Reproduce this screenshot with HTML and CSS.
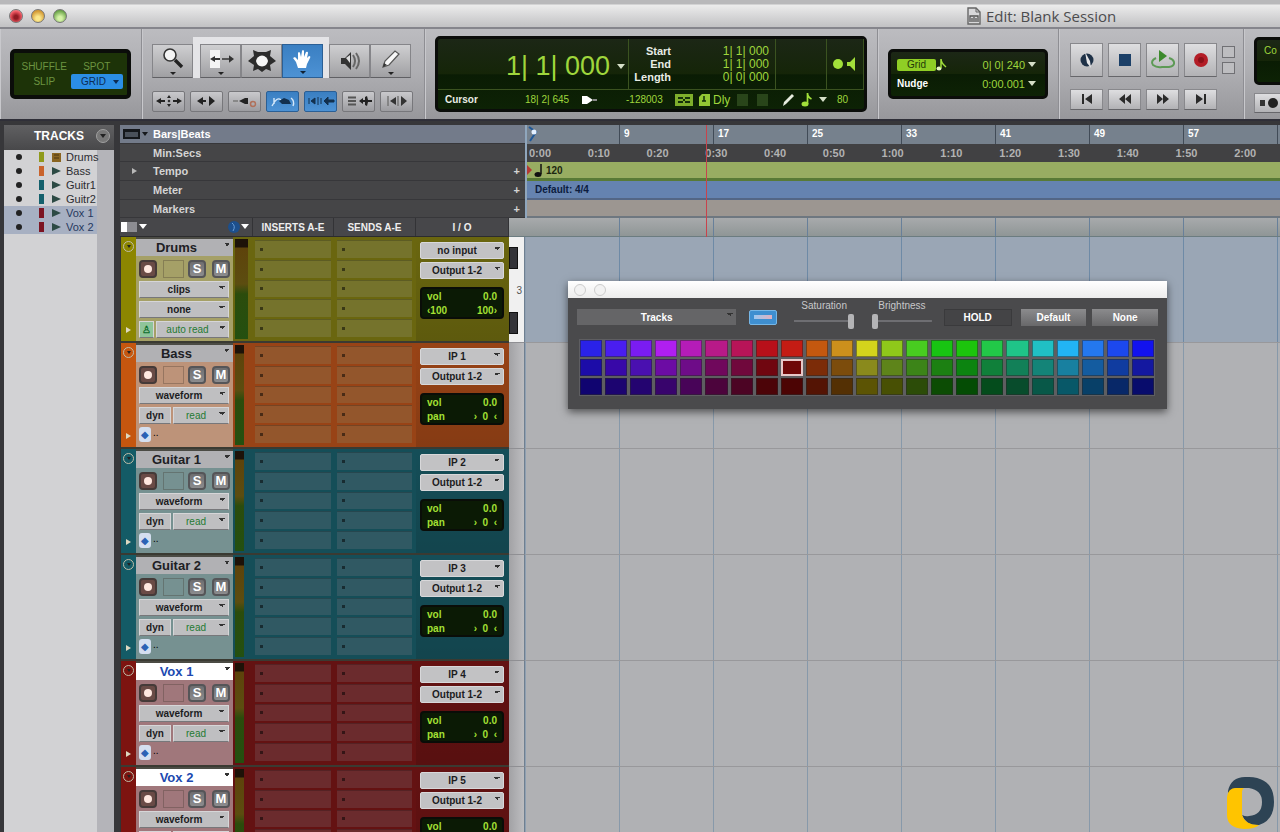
FILE: index.html
```
<!DOCTYPE html>
<html lang="en">
<head>
  <meta charset="UTF-8">
  <meta name="viewport" content="width=device-width, initial-scale=1.0">
  <title>Edit: Blank Session</title>
  <link rel="stylesheet" href="styles.css">
</head>
<body>
  <!-- Window title -->
  <header class="titlebar">
    <div class="lights">
      <button class="light red" aria-label="Close"></button>
      <button class="light yellow" aria-label="Minimize"></button>
      <button class="light green" aria-label="Zoom"></button>
    </div>
    <div class="title">
      <svg width="14" height="18" viewBox="0 0 14 18"><path d="M1 1h8l4 4v12H1z" fill="#d8d8da" stroke="#666" stroke-width="1.4"/><path d="M9 1v4h4" fill="none" stroke="#666"/><path d="M3 15V9h8v6M5 15v-4M7 15v-5M9 15v-4" stroke="#555" fill="none" stroke-width="1.3"/></svg>
      <span>Edit: Blank Session</span>
    </div>
  </header>

  <!-- Toolbar -->
  <div class="toolbar">
    <section class="group modes">
      <div class="lcd mode-lcd">
        <button>SHUFFLE</button>
        <button>SPOT</button>
        <button>SLIP</button>
        <button class="on">GRID<i class="caret"></i></button>
      </div>
    </section>

    <section class="group tools">
      <div class="tool-row">
        <button class="tool" aria-label="Zoomer"><svg width="28" height="30" viewBox="0 0 28 30"><circle cx="11" cy="9" r="6" fill="#f4f4f4" stroke="#333" stroke-width="1.6"/><path d="M16 14l7 7" stroke="#222" stroke-width="3.4"/><path d="M11 26h6l-3 3z" fill="#222"/></svg></button>
        <div class="smart">
          <button class="tool" aria-label="Trim"><svg width="28" height="30" viewBox="0 0 28 30"><path d="M3 4h10v18H3z" fill="#f4f4f4"/><path d="M3 13l5-3v2h5v2H8v2zM15 12.200h7v-3l5 3.800-5 3.800v-3h-7z" fill="#333"/><path d="M11 26h6l-3 3z" fill="#222"/></svg></button>
          <button class="tool" aria-label="Selector"><svg width="28" height="30" viewBox="0 0 28 30"><path d="M5 4l5 2h8l5-2-1 6 6 5-6 4 1 6-5-2-4 3-4-3-5 2 1-6-6-4 6-5z" fill="#2c2c2c"/><path d="M8 15q1-5 6-5.500 5 .5 6 5.500-1 5-6 5.500-5-.5-6-5.500z" fill="#f6f6f6"/></svg></button>
          <button class="tool on" aria-label="Grabber"><svg width="28" height="30" viewBox="0 0 28 30"><path d="M9 22l-2-6-3-4 2-1 3 3V7q1-2 2 0l1 4 1-6q1-2 2 0v6l2-5q2-1 2 1l-1 5 2-2q2 0 1 2l-3 6-1 4z" fill="#fff"/><path d="M11 25h6l-3 3z" fill="#123"/></svg></button>
        </div>
        <button class="tool" aria-label="Scrubber"><svg width="28" height="30" viewBox="0 0 28 30"><path d="M5 12h4l6-6v18l-6-6H5z" fill="#333"/><path d="M10 12l4-3v8z" fill="#ddd"/><path d="M17 9q4 6 0 12M20 7q6 8 0 16" fill="none" stroke="#666" stroke-width="2"/></svg></button>
        <button class="tool" aria-label="Pencil"><svg width="28" height="30" viewBox="0 0 28 30"><path d="M6 21l2-6L18 5l4 3-10 11z" fill="#f8f8f8" stroke="#555" stroke-width="1.200"/><path d="M6 21l1-4 3 2z" fill="#333"/><path d="M11 26h6l-3 3z" fill="#222"/></svg></button>
      </div>
      <div class="option-row">
        <button class="small" aria-label="Zoom toggle"><svg width="28" height="14" viewBox="0 0 28 14"><path d="M1 7l5-3v2h4v2H6v2zM27 7l-5-3v2h-4v2h4v2zM14 1l2 3h-4zM14 13l2-3h-4zM12.500 7L14 5.500 15.500 7 14 8.500z" fill="#222"/></svg></button>
        <button class="small" aria-label="Tab to transient"><svg width="28" height="14" viewBox="0 0 28 14"><path d="M4 7l6-4v3h3v2h-3v3zM16 2l6 5-6 5z" fill="#222"/></svg></button>
        <button class="small" aria-label="Commands focus"><svg width="28" height="14" viewBox="0 0 28 14"><path d="M2 6h5v2H2z" fill="#888"/><path d="M8 7l6-3h3v6h-3z" fill="#222"/><circle cx="22" cy="10" r="2.500" fill="none" stroke="#b0705a" stroke-width="1.500"/></svg></button>
        <button class="small on" aria-label="Link timeline"><svg width="28" height="14" viewBox="0 0 28 14"><path d="M5 10V4M3 12q5-10 9-6M24 12q2-5-2-8" fill="none" stroke="#d5e8fa" stroke-width="1.400"/><path d="M10 7l5-3 5 2 2 4h-9z" fill="#12304f"/></svg></button>
        <button class="small on" aria-label="Link track"><svg width="28" height="14" viewBox="0 0 28 14"><path d="M2 4v6M4 7l4-3v6zM11 3v8M14 4v6M17 7l4-4v3h6v2h-6v3z" fill="#12304f" stroke="#12304f"/></svg></button>
        <button class="small" aria-label="Mirrored MIDI"><svg width="28" height="14" viewBox="0 0 28 14"><path d="M3 3.500h8M3 7h8M3 10.500h8" stroke="#555" stroke-width="2"/><path d="M14 7l4-3v2h2V3l2-1 1 4h4v2h-4l-1 4-2-1V8h-2v2z" fill="#222"/></svg></button>
        <button class="small" aria-label="Layered editing"><svg width="28" height="14" viewBox="0 0 28 14"><path d="M5 2v10M15 2v10" stroke="#777" stroke-width="1.500"/><path d="M13 3v8L7 7zM18 2l6 5-6 5z" fill="#333"/></svg></button>
      </div>
    </section>

    <section class="group counter">
      <div class="lcd counter-lcd">
        <div class="main-count">1| 1| 000<i class="caret"></i></div>
        <dl class="selection">
          <dt>Start</dt><dd>1| 1| 000</dd>
          <dt>End</dt><dd>1| 1| 000</dd>
          <dt>Length</dt><dd>0| 0| 000</dd>
        </dl>
        <div class="blank"></div>
        <div class="status">
          <svg width="26" height="16" viewBox="0 0 26 16"><circle cx="6" cy="8" r="5" fill="#a2e03a"/><path d="M15 6h3l5-5v14l-5-5h-3z" fill="#a2e03a"/></svg>
        </div>
        <div class="cursor-row">
          <b>Cursor</b>
          <span>18| 2| 645</span>
          <svg width="17" height="10" viewBox="0 0 17 10"><path d="M1 1h5l6 4-6 4H1z" fill="#fff"/><path d="M12 4h4v2h-4z" fill="#888"/></svg>
          <span>-128003</span>
          <svg width="18" height="12" viewBox="0 0 18 12"><path d="M0 0h18v12H0z" fill="#7fae2c"/><path d="M3 3h5v2H3zM10 3h5v2h-5zM3 7h5v2H3zM10 7h5v2h-5zM8 5h2v2H8z" fill="#15300a"/></svg>
          <svg width="11" height="12" viewBox="0 0 11 12"><path d="M3 0h8v12H0V3z" fill="#93c834"/><path d="M3 7h4M5 2v5" stroke="#15300a" stroke-width="1.500"/></svg>
          <span class="dly">Dly</span>
          <i class="dim"></i>
          <i class="dim"></i>
          <svg width="13" height="14" viewBox="0 0 13 14"><path d="M1 13l1-4 8-8 2 2-8 8z" fill="#e8ece0"/></svg>
          <svg width="12" height="15" viewBox="0 0 12 15"><ellipse cx="4" cy="12" rx="3.500" ry="2.500" fill="#a2e03a"/><path d="M6.500 12V1q0 4 4 6" fill="none" stroke="#a2e03a" stroke-width="1.700"/></svg>
          <i class="caret"></i>
          <span>80</span>
        </div>
      </div>
    </section>

    <section class="group gridval">
      <div class="lcd grid-lcd">
        <span class="grid-tag">Grid</span>
        <svg width="12" height="13" viewBox="0 0 12 13"><ellipse cx="3" cy="10.500" rx="2.500" ry="2" fill="#e4f4c0"/><path d="M5 10V1q0 4 5 8" fill="none" stroke="#a2e03a" stroke-width="1.500"/></svg>
        <span class="val">0| 0| 240</span><i class="caret"></i>
        <b>Nudge</b><span></span>
        <span class="val">0:00.001</span><i class="caret"></i>
      </div>
    </section>

    <section class="group transport">
      <div class="play-row">
        <button class="key" aria-label="Online"><svg width="20" height="20" viewBox="0 0 20 20"><circle cx="10" cy="10" r="6.500" fill="#1e3147"/><path d="M8 2l5 9 1 7-4-5z" fill="#e4e4e6"/></svg></button>
        <button class="key" aria-label="Stop"><svg width="20" height="20" viewBox="0 0 20 20"><path d="M4 4h12v12H4z" fill="#1c4068"/></svg></button>
        <button class="key" aria-label="Play"><svg width="28" height="22" viewBox="0 0 28 22"><path d="M10 1l8 6-8 6z" fill="#3c8a2c"/><path d="M7 9q-6 3-3 7 4 3 9 2h7q6-1 5-5-1-3-5-4" fill="none" stroke="#5d9a55" stroke-width="2"/></svg></button>
        <button class="key" aria-label="Record"><svg width="20" height="20" viewBox="0 0 20 20"><circle cx="10" cy="10" r="7" fill="#b31d26"/><circle cx="10" cy="10" r="3" fill="#8b1018"/></svg></button>
        <div class="mini-stack"><button aria-label="Wait for note"></button><button aria-label="Metronome"></button></div>
      </div>
      <div class="seek-row">
        <button class="key" aria-label="Return to zero"><svg width="16" height="12" viewBox="0 0 16 12"><path d="M3 1h2v10H3zM13 1v10L6 6z" fill="#2a2a2a"/></svg></button>
        <button class="key" aria-label="Rewind"><svg width="16" height="12" viewBox="0 0 16 12"><path d="M8 1v10L2 6zM14 1v10L8 6z" fill="#2a2a2a"/></svg></button>
        <button class="key" aria-label="Fast forward"><svg width="16" height="12" viewBox="0 0 16 12"><path d="M2 1v10l6-5zM8 1v10l6-5z" fill="#2a2a2a"/></svg></button>
        <button class="key" aria-label="Go to end"><svg width="16" height="12" viewBox="0 0 16 12"><path d="M3 1v10l7-5zM11 1h2v10h-2z" fill="#2a2a2a"/></svg></button>
      </div>
    </section>

    <section class="group midi">
      <div class="lcd midi-lcd">Co</div>
      <button class="key" aria-label="Metronome click"><svg width="34" height="14" viewBox="0 0 34 14"><path d="M3 4h5v6H3z" fill="#333"/><circle cx="16" cy="7" r="5" fill="#222"/></svg></button>
    </section>
  </div>

  <div class="workspace">
    <!-- Track list -->
    <aside class="track-list">
      <h2>TRACKS <button aria-label="Track list menu"><i class="caret"></i></button></h2>
      <ul id="track-names"></ul>
    </aside>

    <main class="edit">
      <div class="rulers">
        <div class="ruler-names">
          <div class="main-ruler"><svg width="26" height="12" viewBox="0 0 26 12"><path d="M0 1h17v10H0z" fill="#15181c"/><path d="M2 4h13v5H2z" fill="#4a515b"/><path d="M19 4h6l-3 4z" fill="#15181c"/></svg><span>Bars|Beats</span></div>
          <div><i></i><span>Min:Secs</span></div>
          <div><i class="expand"></i><span>Tempo</span><em>+</em></div>
          <div><i></i><span>Meter</span><em>+</em></div>
          <div><i></i><span>Markers</span><em>+</em></div>
        </div>
        <div class="ruler-lines">
          <div class="bars" id="bars"></div>
          <div class="time"><div class="time-cells" id="time"></div></div>
          <div class="tempo">
            <svg width="18" height="16" viewBox="0 0 18 16"><path d="M0 3l5 5-5 5z" fill="#b33a35"/><ellipse cx="11" cy="12.500" rx="3.500" ry="2.500" fill="#111"/><path d="M14 12V2" stroke="#111" stroke-width="1.500"/></svg>120
          </div>
          <div class="meter-line">Default: 4/4</div>
          <div class="markers"></div>
        </div>
      </div>

      <div class="columns">
        <div class="col-names">
          <div class="view-col">
            <svg width="28" height="14" viewBox="0 0 28 14"><path d="M1 2h6v10H1z" fill="#fff"/><path d="M7 2h10v10H7z" fill="#8d8d92"/><path d="M19 4h8l-4 5z" fill="#fff"/></svg>
            <svg width="24" height="14" viewBox="0 0 24 14"><circle cx="6" cy="7" r="6" fill="#1d4f8c"/><path d="M4 3q4 3 1 8" stroke="#6aa0dc" fill="none"/><path d="M13 4h8l-4 5z" fill="#fff"/></svg>
          </div>
          <div>INSERTS A-E</div>
          <div>SENDS A-E</div>
          <div>I / O</div>
        </div>
        <div class="lane-head"></div>
      </div>

      <div class="tracks" id="tracks"></div>
      <div class="playhead"></div>

      <!-- Color palette window -->
      <div class="palette">
        <div class="palette-title"><button aria-label="Close palette"></button><button aria-label="Minimize palette"></button></div>
        <div class="palette-bar">
          <select aria-label="Apply to"><option>Tracks</option></select>
          <button class="strip-color" aria-label="Apply to channel strip"><i></i></button>
          <label>Saturation<input type="range" value="100"></label>
          <label>Brightness<input type="range" value="0"></label>
          <button class="dark">HOLD</button>
          <button>Default</button>
          <button>None</button>
        </div>
        <div class="swatches" id="swatches"></div>
      </div>

      <svg class="badge" width="48" height="52" viewBox="0 0 48 52">
        <path d="M1 14Q4 0 18 0h4q25 1 25 25 0 18-15 23-13 1-17-10 4 2 7 1 13-1 13-14 0-12-13-14H10Q4 11 1 17z" fill="#2d4354"/>
        <path d="M0 20q1-9 9-9h8q-2 1-2 5v22q3 10 17 10-4 4-15 4Q0 51 0 38z" fill="#ffc400"/>
      </svg>
    </main>
  </div>

  <script src="script.js"></script>
</body>
</html>
```
FILE: styles.css
```
* {
  box-sizing: border-box;
}

body {
  margin: 0;
  height: 100vh;
  display: flex;
  flex-direction: column;
  overflow: hidden;
  background: #3b3b3e;
  font-family: "Liberation Sans", Arial, sans-serif;
  font-size: 10px;
}

button, select, input {
  margin: 0;
  padding: 0;
  border: none;
  font: inherit;
  color: inherit;
}

svg {
  display: block;
  flex: none;
}

/* Title bar */
.titlebar {
  height: 29px;
  flex: none;
  display: flex;
  align-items: center;
  padding: 4px 0 0 9px;
  background: linear-gradient(#b8b8ba 0, #b8b8ba 4px, #ececec 5px, #c3c3c5 26px);
  border-bottom: 2px solid #85858c;
}

.lights {
  display: flex;
  gap: 8px;
}

.light {
  width: 14px;
  height: 14px;
  border-radius: 50%;
  border: 1px solid #777;
}

.red { background: radial-gradient(circle at 50% 60%, #8e1a22 20%, #ee5560 60%, #f5c0c0); }
.yellow { background: radial-gradient(circle at 50% 70%, #fbe78a 20%, #d49b36 70%); }
.green { background: radial-gradient(circle at 50% 70%, #d4f2a6 20%, #68a246 75%); }

.title {
  display: flex;
  align-items: center;
  gap: 5px;
  margin-left: 900px;
  font-family: "Open Sans", "Noto Sans", sans-serif;
  font-size: 15px;
  line-height: 20px;
  color: #4c4c4e;
  white-space: nowrap;
}

/* Toolbar */
.toolbar {
  height: 92px;
  flex: none;
  display: flex;
  background: linear-gradient(#bcbcc0, #adadb1 50%, #97979b);
  border-bottom: 2px solid #2f2f38;
  overflow: hidden;
}

.group {
  flex: none;
  display: flex;
  flex-direction: column;
  justify-content: center;
  padding: 0 10px;
  border-right: 1px solid #8e8e93;
  box-shadow: inset 1px 0 #c8c8cc;
}

.lcd {
  background: linear-gradient(#1c2716, #152508 50%, #0a1c04 51%, #0d2205);
  border: 3px solid #0b0d0a;
  border-radius: 5px;
  color: #9fd63c;
}

.mode-lcd {
  width: 121px;
  height: 50px;
  padding: 6px 4px;
  display: grid;
  grid-template-columns: 1fr 1fr;
  background: #1d3308;
  border-width: 4px;
}

.mode-lcd button {
  background: none;
  color: #6c9440;
}

.mode-lcd .on {
  display: flex;
  align-items: center;
  justify-content: flex-end;
  gap: 7px;
  padding-right: 4px;
  background: #2b8ee6;
  color: #0c2c55;
  border-radius: 2px;
}

.mode-lcd .caret {
  border-width: 4px 3px 0;
  border-top-color: #0c2c55;
}

.tools {
  width: 283px;
  gap: 13px;
}

.tool-row {
  display: flex;
  align-items: flex-end;
}

.smart {
  display: flex;
  padding: 7px 6px 0 7px;
  background: #e4e4e7;
}

.tool {
  width: 41px;
  height: 34px;
  display: flex;
  justify-content: center;
  align-items: center;
  background: linear-gradient(#cfcfd1, #a0a0a3);
  border: 1px solid #858589;
  border-bottom-color: #606064;
}

.tool.on, .small.on {
  background: linear-gradient(#3a7fc2, #4d92d4);
  border-color: #2b5f95;
}

.option-row {
  display: flex;
  gap: 5px;
}

.small {
  width: 33px;
  height: 21px;
  display: flex;
  justify-content: center;
  align-items: center;
  background: linear-gradient(#c9c9cc, #9c9ca0);
  border: 1px solid #77777b;
  border-radius: 2px;
}

.counter {
  width: 453px;
}

.counter-lcd {
  height: 76px;
  display: grid;
  grid-template-columns: 191px 147px 51px 1fr;
  grid-template-rows: 50px 1fr;
}

.counter-lcd > div:not(.cursor-row), .selection {
  border-right: 1px solid #3b5320;
}

.counter-lcd > .status {
  display: flex;
  justify-content: center;
  align-items: center;
  border: none;
}

.main-count {
  display: flex;
  align-items: center;
  justify-content: flex-end;
  gap: 7px;
  padding: 4px 3px 0 0;
  font-size: 27px;
}

.caret {
  width: 0;
  height: 0;
  border: 4px solid transparent;
  border-top: 5px solid #d5dfc8;
  border-bottom: 0;
}

.selection {
  margin: 0;
  padding: 6px 6px 0 0;
  display: grid;
  grid-template-columns: 42px 1fr;
  grid-auto-rows: 13px;
  font-size: 12px;
  line-height: 13px;
  text-align: right;
}

.selection dt {
  font-size: 11px;
  font-weight: bold;
  color: #e8ece4;
}

.selection dd {
  margin: 0;
}

.cursor-row {
  grid-column: 1 / -1;
  display: grid;
  grid-template-columns: 80px 56px 45px 49px 24px 14px 24px 20px 25px 19px 18px 18px 1fr;
  align-items: center;
  padding-left: 7px;
  border-top: 1px solid #3b5320;
  white-space: nowrap;
}

.cursor-row b {
  color: #e8ece4;
}

.cursor-row .dly {
  font-size: 12px;
}

.dim {
  width: 11px;
  height: 12px;
  background: #29451a;
}

.gridval {
  width: 181px;
  padding: 0 10px;
}

.grid-lcd {
  height: 50px;
  padding: 3px 5px 3px 6px;
  display: grid;
  grid-template-columns: 39px 14px 1fr 12px;
  grid-template-rows: 1fr 1fr;
  align-items: center;
}

.grid-lcd .val {
  text-align: right;
  font-size: 11px;
  padding-right: 3px;
}

.grid-lcd b {
  color: #fff;
}

.grid-tag {
  background: #8fce25;
  color: #1f3a08;
  text-align: center;
  line-height: 12px;
  border-radius: 2px;
}

.transport {
  width: 185px;
  padding: 4px 0 0 11px;
  gap: 12px;
}

.play-row, .seek-row {
  display: flex;
  gap: 5px;
}

.key {
  width: 33px;
  height: 34px;
  display: flex;
  align-items: center;
  justify-content: center;
  background: linear-gradient(#dedee0, #b2b2b5);
  border: 1px solid #88888c;
  border-bottom-color: #66666a;
}

.seek-row .key {
  height: 21px;
}

.mini-stack {
  display: flex;
  flex-direction: column;
  justify-content: center;
  gap: 4px;
}

.mini-stack button {
  width: 13px;
  height: 12px;
  background: #bdbdc0;
  border: 1px solid #707074;
}

.midi {
  padding-top: 2px;
  gap: 8px;
}

.midi-lcd {
  width: 120px;
  height: 48px;
  padding: 5px 7px;
}

.midi .key {
  height: 20px;
  width: 40px;
}

/* Workspace */
.workspace {
  flex: 1;
  min-height: 0;
  display: flex;
  padding: 4px 0 0 4px;
  background: #37373a;
}

.track-list {
  width: 110px;
  flex: none;
  margin-right: 6px;
  background: linear-gradient(to right, #d2d2d4 93px, #b4b4b9 93px);
}

.track-list h2 {
  margin: 0;
  height: 25px;
  display: flex;
  align-items: center;
  justify-content: flex-end;
  gap: 12px;
  padding: 0 4px 4px 0;
  font-size: 12px;
  color: #fff;
  background: linear-gradient(#606062, #48484a);
}

.track-list h2 button {
  width: 14px;
  height: 14px;
  display: flex;
  align-items: center;
  justify-content: center;
  background: #777;
  border: 1px solid #a0a0a0;
  border-radius: 50%;
}

.track-list h2 .caret {
  border-top-color: #222;
  border-width: 4px 3px 0;
}

.track-list ul {
  list-style: none;
  margin: 0 17px 0 0;
  padding: 0;
  font-size: 11px;
}

.track-list li {
  height: 14px;
  display: flex;
  align-items: center;
  padding-left: 12px;
  line-height: 14px;
  color: #2c2c30;
  white-space: nowrap;
}

.track-list li.selected {
  background: #a7b0c2;
  color: #26385e;
}

.dot {
  width: 6px;
  height: 6px;
  flex: none;
  border-radius: 50%;
  background: #222;
}

.chip {
  width: 5px;
  height: 10px;
  flex: none;
  margin: 0 8px 0 17px;
}

.kind {
  width: 14px;
  color: #223;
}

.drums-chip { background: #8f9a1c; }
.bass-chip { background: #c9632c; }
.guitar-chip { background: #14606c; }
.vox-chip { background: #7c1422; }

/* Rulers */
.edit {
  flex: 1;
  min-width: 0;
  position: relative;
  display: flex;
  flex-direction: column;
  overflow: hidden;
}

.rulers, .columns, .track {
  flex: none;
  display: grid;
  grid-template-columns: 405px minmax(0, 1fr);
}

.ruler-names, .ruler-lines {
  display: grid;
  grid-template-columns: minmax(0, 1fr);
  grid-template-rows: 19px 18px 19px 19px 18px;
}

.ruler-names > div {
  display: flex;
  align-items: center;
  padding: 0 5px 0 3px;
  background: #454547;
  border-bottom: 1px solid #37373a;
  color: #d4d4d4;
  font-size: 11px;
  font-weight: bold;
}

.ruler-names > .main-ruler {
  background: #737b8a;
  color: #fff;
}

.ruler-names svg, .ruler-names i {
  width: 26px;
  margin-right: 4px;
}

.ruler-names em {
  margin-left: auto;
  font-style: normal;
}

.ruler-names .expand {
  width: 0;
  margin: 0 16px 0 9px;
  border: 3px solid transparent;
  border-left: 5px solid #b8b8b8;
  border-right: 0;
}

.ruler-lines {
  min-width: 0;
  overflow: hidden;
  border-left: 2px solid #8fa6bd;
}

.bars {
  display: flex;
  background: #76818d;
  color: #fff;
  font-weight: bold;
  line-height: 18px;
  overflow: hidden;
}

.bars div {
  width: 94px;
  flex: none;
  padding-left: 4px;
  border-right: 1px solid #414b57;
}

.bars div:first-child {
  width: 93px;
  padding: 1px 0 0 1px;
}

.time {
  background: #414143;
  color: #b2b2b2;
  font-size: 11px;
  font-weight: bold;
  line-height: 18px;
}

.time-cells {
  display: flex;
  width: calc(100% + 13px);
  padding-left: 2px;
}

.time-cells span {
  flex: 1;
}

.tempo {
  display: flex;
  align-items: center;
  gap: 1px;
  background: #98ad62;
  border-bottom: 3px solid #587a36;
  color: #1c2610;
  font-weight: bold;
}

.meter-line {
  padding-left: 8px;
  background: #6583b0;
  border-bottom: 2px solid #536685;
  color: #0c1c3e;
  font-weight: bold;
  line-height: 17px;
}

.markers {
  background: #9c9691;
  border-bottom: 2px solid #6e7780;
}

/* Column names */
.columns {
  height: 19px;
}

.col-names {
  width: 389px;
  display: grid;
  grid-template-columns: 133px 81px 82px 1fr;
  background: #47474a;
  border-bottom: 1px solid #2c2c2e;
  color: #eee;
  font-weight: bold;
  line-height: 20px;
  text-align: center;
}

.col-names > div {
  height: 18px;
  border-right: 1px solid #333336;
}

.view-col {
  display: flex;
  align-items: center;
  justify-content: space-between;
}

.lane-head {
  margin-left: -16px;
  background: repeating-linear-gradient(to right, transparent 0 93px, #68809a 93px 94px) 17px 0 no-repeat, linear-gradient(#a8aaac, #8f9696);
  border-bottom: 1px solid #6b7c80;
}

/* Tracks */
.tracks {
  flex: 1;
  min-height: 0;
  overflow: hidden;
}

.track {
  height: 106px;
}

.strip {
  display: grid;
  grid-template-columns: 16px 97px 20px 82px 81px 93px 16px;
  min-width: 0;
}

.drums { --edge: #8c8600; --body: #6a660f; --slot: #75732c; --panel: #a5a067; }
.bass { --edge: #c5560f; --body: #984316; --slot: #93562c; --panel: #bd9379; }
.guitar { --edge: #145b66; --body: #154e58; --slot: #305963; --panel: #769191; }
.vox { --edge: #7d1410; --body: #641212; --slot: #6b2b2d; --panel: #a0777b; }

.edge {
  display: flex;
  flex-direction: column;
  justify-content: space-between;
  align-items: center;
  padding: 4px 0 8px;
  background: var(--edge);
  border-left: 1px solid #333;
  border-bottom: 2px solid #3a3a32;
}

.fold {
  width: 11px;
  height: 11px;
  display: flex;
  align-items: center;
  justify-content: center;
  border-radius: 50%;
  background: none;
  border: 1px solid #c0bda8;
}

.fold .caret {
  border-width: 3px 2px 0;
  border-top-color: #222;
}

.play-mark {
  border: 3px solid transparent;
  border-left: 5px solid #ddd8c0;
  border-right: 0;
}

.panel {
  display: flex;
  flex-direction: column;
  gap: 3px;
  background: var(--panel);
  border-bottom: 2px solid #3a3a32;
}

.name {
  height: 19px;
  border-top: 2px solid #4b4b44;
  background: #b1b1b4;
  color: #202024;
  font-size: 13px;
  font-weight: bold;
}

.selected .name {
  background-color: #fff;
  color: #2049b0;
}

/* Drop-downs share one small arrow drawn from two triangles */
select {
  appearance: none;
  text-align-last: center;
  border-radius: 0;
  background:
    linear-gradient(45deg, transparent 50%, #333 50%) right 6px top 4px / 3px 3px no-repeat,
    linear-gradient(-45deg, transparent 50%, #333 50%) right 3px top 4px / 3px 3px no-repeat,
    #c4c4c6;
}

.name select {
  width: 100%;
  height: 17px;
  padding-right: 16px;
  background-color: transparent;
}

.buttons {
  height: 19px;
  display: flex;
  align-items: center;
  padding: 0 3px;
}

.buttons button {
  width: 18px;
  height: 18px;
  background: linear-gradient(#6e6e70, #8c8c8e);
  border: 2px solid #555558;
  border-radius: 4px;
  color: #fff;
  font-size: 13px;
  font-weight: bold;
  line-height: 14px;
}

.buttons .rec {
  display: flex;
  justify-content: center;
  align-items: center;
  background: #6a4b46;
  border-color: #453a38;
}

.buttons .rec i {
  width: 8px;
  height: 8px;
  border-radius: 50%;
  background: #ffe8e0;
}

.well {
  width: 21px;
  height: 18px;
  margin: 0 4px 0 6px;
  border: 1px solid rgba(60, 50, 40, 0.3);
}

.buttons button:last-child {
  margin-left: 6px;
}

.line {
  display: flex;
  gap: 2px;
  padding: 0 4px 0 3px;
}

.line select, .line .dyn, .line .auto {
  height: 17px;
  background-color: #bfbfc1;
  border: 1px solid #d6d6d8;
  border-bottom-color: #77777a;
  color: #1c1c1e;
  font-weight: bold;
}

.line select {
  flex: 1;
  min-width: 0;
  padding-right: 10px;
}

.line .dyn {
  width: 32px;
}

.line .auto {
  width: 15px;
  background: #8fc59a;
  color: #0c6b2c;
}

.line .read {
  color: #1f7a33;
  font-weight: normal;
}

.line .group-icon {
  width: 12px;
  height: 15px;
  background: #d4dff0;
  border-radius: 3px;
  color: #2b62b5;
  line-height: 15px;
}

.level {
  padding: 2px 9px 2px 2px;
  background: var(--body);
  border-bottom: 2px solid #3a3a32;
}

.level div {
  height: 100%;
  background: linear-gradient(#1d1208 8%, #5e430b 9%, #5c4d10 45%, #2b4c0c 55%, #245010);
}

.drums .level {
  padding-right: 5px;
}

.slots {
  display: grid;
  grid-template-rows: repeat(5, 1fr);
  gap: 2px;
  padding: 3px 4px 4px 2px;
  background: var(--body);
  border-bottom: 2px solid #3a3a32;
}

.slots button {
  background: var(--slot);
  border-top: 1px solid rgba(0, 0, 0, 0.2);
  display: flex;
  align-items: center;
  padding-left: 5px;
}

.slots i {
  width: 3px;
  height: 3px;
  background: rgba(0, 0, 0, 0.5);
}

.io {
  display: flex;
  flex-direction: column;
  gap: 3px;
  padding: 5px 5px 0 4px;
  background: linear-gradient(rgba(0, 0, 0, 0), rgba(0, 0, 0, 0.12)), var(--body);
  border-bottom: 2px solid #3a3a32;
}

.io select {
  height: 17px;
  background-color: #c2c2c4;
  border: 1px solid #d8d8da;
  border-radius: 2px;
  color: #1c1c1e;
  font-weight: bold;
  padding-right: 10px;
}

.volume {
  height: 32px;
  margin: 5px 0 0 0;
  padding: 0 5px;
  display: grid;
  grid-template-columns: 1fr auto;
  align-items: center;
  background: #0b1a05;
  border: 2px solid #0a0d08;
  border-radius: 4px;
  color: #a4e034;
  font-weight: bold;
}

.volume span:nth-child(even) {
  text-align: right;
}

.gutter {
  background: linear-gradient(to right, #a2a2a5, #bdbdc0);
  border-right: 1px solid #6f7f90;
  border-bottom: 1px solid #8f8f93;
}

.keys {
  display: flex;
  flex-direction: column;
  justify-content: space-between;
  padding: 10px 2px 8px 0;
  background: #f0f0f0;
  color: #555;
  text-align: right;
}

.keys i {
  width: 9px;
  height: 22px;
  background: #333338;
  border: 1px solid #111;
}

.lane {
  border-left: 1px solid #8fa0b2;
  border-bottom: 1px solid #98989b;
  background: repeating-linear-gradient(to right, transparent 0 93px, #8799aa 93px 94px), #b0b1b4;
}

.drums .lane {
  background: repeating-linear-gradient(to right, transparent 0 93px, #6e8aa6 93px 94px), #9aa6b5;
}

.playhead {
  position: absolute;
  left: 586px;
  top: 0;
  width: 1px;
  height: 112px;
  background: #c8434c;
}

/* Color palette */
.palette {
  position: absolute;
  left: 448px;
  top: 156px;
  width: 599px;
  background: #4a4a4c;
  box-shadow: 0 3px 8px rgba(0, 0, 0, 0.55);
}

.palette-title {
  height: 17px;
  display: flex;
  align-items: center;
  gap: 8px;
  padding-left: 6px;
  background: linear-gradient(#fff, #ececec);
}

.palette-title button {
  width: 12px;
  height: 12px;
  border-radius: 50%;
  border: 1px solid #ccc;
  background: #f2f2f2;
}

.palette-bar {
  height: 34px;
  display: flex;
  align-items: center;
  padding: 4px 9px 0;
  color: #fff;
  font-weight: bold;
}

.palette-bar select {
  width: 160px;
  height: 16px;
  background-color: #656567;
}

.palette-bar .strip-color {
  width: 28px;
  height: 15px;
  margin: 0 17px 0 13px;
  padding: 0 4px;
  background: #3f8fd0;
  border: 1px solid #76b6e6;
  border-radius: 2px;
}

.strip-color i {
  display: block;
  height: 4px;
  background: linear-gradient(to right, #9cc8f0, #e0b0c0);
}

.palette-bar label {
  width: 60px;
  height: 32px;
  margin-right: 18px;
  display: flex;
  flex-direction: column;
  align-items: center;
  gap: 2px;
  font-size: 10px;
  font-weight: normal;
  line-height: 10px;
  color: #c8c8ca;
}

.palette-bar label + label {
  margin-right: 12px;
}

.palette-bar input {
  appearance: none;
  width: 100%;
  height: 16px;
  background: linear-gradient(#6e6e72, #6e6e72) center / 100% 2px no-repeat;
}

.palette-bar input::-webkit-slider-thumb {
  appearance: none;
  width: 6px;
  height: 15px;
  border-radius: 2px;
  background: #b4b4b6;
}

.palette-bar > button {
  width: 66px;
  height: 17px;
  margin-left: 6px;
  background: linear-gradient(#8b8b8d, #68686a);
}

.palette-bar > .dark {
  width: 68px;
  margin-right: 3px;
  margin-left: 0;
  background: #444446;
  border: 1px solid #3a3a3c;
}

.swatches {
  display: grid;
  grid-template-columns: repeat(23, 1fr);
  grid-auto-rows: 17px;
  gap: 2px 3px;
  margin: 7px 12px 13px 11px;
  padding: 1px;
  background: #5e5e61;
}

.swatches button {
  border: 1px solid rgba(40, 40, 40, 0.5);
}

.swatches .picked {
  border: 2px solid #e8c8c8;
}

.badge {
  position: absolute;
  right: 5px;
  bottom: 3px;
}
```
FILE: script.js
```
const tracks = [
  { name: "Drums", short: "Drums", color: "drums", input: "no input", midi: true },
  { name: "Bass", short: "Bass", color: "bass", input: "IP 1" },
  { name: "Guitar 1", short: "Guitr1", color: "guitar", input: "IP 2" },
  { name: "Guitar 2", short: "Guitr2", color: "guitar", input: "IP 3" },
  { name: "Vox 1", short: "Vox 1", color: "vox", input: "IP 4", selected: true },
  { name: "Vox 2", short: "Vox 2", color: "vox", input: "IP 5", selected: true }
];

// Palette colors, one row per brightness
const palette = [
  "#2a22e8 #4a1ef0 #7a1cf2 #b01ff0 #b51cb8 #b81a88 #b81458 #b8101a #c41c14 #c4580f #cc901c #d4d41c #8fc81a #48cc20 #18c412 #1cc40c #22c848 #1fc488 #20c0c4 #22b4f4 #2478ee #1c48ee #1212ee",
  "#1c0ca8 #3808a8 #4a10b0 #6c0ca4 #6e0c88 #70085c #70083c #700610 #6e0808 #7c2c08 #7c4c0c #8a8a1c #5e841a #3c8418 #1c8012 #0c8410 #10803a #128058 #148478 #1880a0 #145ca0 #103ca0 #1418a0",
  "#100470 #1c0470 #240470 #38046c #480458 #4c043c #4c0424 #4c0408 #4c0404 #541404 #543004 #5c5404 #485004 #2c4c08 #0c4c04 #044c04 #044c1c #084c2c #085848 #085868 #084068 #082868 #080c6c"
];

document.getElementById("track-names").innerHTML = tracks.map(t => `
  <li class="${t.selected ? "selected" : ""}">
    <i class="dot"></i><i class="chip ${t.color}-chip"></i>
    <svg class="kind" width="14" height="10" viewBox="0 0 14 10">${t.midi
      ? '<path d="M0 1h9v9H0z" fill="#8a6420"/><path d="M2 3h5M2 6h5" stroke="#4a3410"/>'
      : '<path d="M0 1l9 4-9 4z" fill="#2c4a44"/>'}</svg>
    ${t.short}
  </li>`).join("");

// Bar numbers, every 8 bars
const bars = ["", 9, 17, 25, 33, 41, 49, 57];
document.getElementById("bars").innerHTML = bars.map((b, i) => i === 0
  ? '<div><svg width="12" height="16" viewBox="0 0 12 16"><path d="M1 1l7 5-6 9" fill="none" stroke="#1f5796" stroke-width="2"/><circle cx="6" cy="6" r="2.500" fill="#e4f0ff"/></svg></div>'
  : `<div>${b}</div>`).join("");

let times = "";
for (let s = 0; s <= 120; s += 10) {
  times += `<span>${Math.floor(s / 60)}:${String(s % 60).padStart(2, "0")}</span>`;
}
document.getElementById("time").innerHTML = times;

const slots = '<div class="slots">' + '<button aria-label="Empty slot"><i></i></button>'.repeat(5) + "</div>";

function trackLines(t) {
  if (t.midi) {
    return `
      <div class="line"><select aria-label="View"><option>clips</option></select></div>
      <div class="line"><select aria-label="Patch"><option>none</option></select></div>
      <div class="line"><button class="auto" aria-label="Timebase">♙</button><select class="read" aria-label="Automation"><option>auto read</option></select></div>`;
  }
  return `
      <div class="line"><select aria-label="View"><option>waveform</option></select></div>
      <div class="line"><button class="dyn">dyn</button><select class="read" aria-label="Automation"><option>read</option></select></div>
      <div class="line"><button class="group-icon" aria-label="Elastic audio">◆</button><span>..</span></div>`;
}

document.getElementById("tracks").innerHTML = tracks.map(t => `
  <div class="track ${t.color} ${t.selected ? "selected" : ""}">
    <div class="strip">
      <div class="edge"><button class="fold" aria-label="Track height"><i class="caret"></i></button><i class="play-mark"></i></div>
      <div class="panel">
        <div class="name"><select aria-label="Track"><option>${t.name}</option></select></div>
        <div class="buttons">
          <button class="rec" aria-label="Record enable"><i></i></button><div class="well"></div><button>S</button><button>M</button>
        </div>
        ${trackLines(t)}
      </div>
      <div class="level"><div></div></div>
      ${slots}
      ${slots}
      <div class="io">
        <select aria-label="Input"><option>${t.input}</option></select>
        <select aria-label="Output"><option>Output 1-2</option></select>
        <div class="volume">
          <span>vol</span><span>0.0</span>
          ${t.midi ? "<span>‹100</span><span>100›</span>" : "<span>pan</span><span>› &nbsp;0&nbsp; ‹</span>"}
        </div>
      </div>
      ${t.midi ? '<div class="gutter keys"><i></i>3<i></i></div>' : '<div class="gutter"></div>'}
    </div>
    <div class="lane"></div>
  </div>`).join("");

document.getElementById("swatches").innerHTML = palette.map((row, r) =>
  row.split(" ").map((c, i) =>
    `<button class="${r === 1 && i === 8 ? "picked" : ""}" style="background:${c}" aria-label="${c}"></button>`
  ).join("")).join("");
```
